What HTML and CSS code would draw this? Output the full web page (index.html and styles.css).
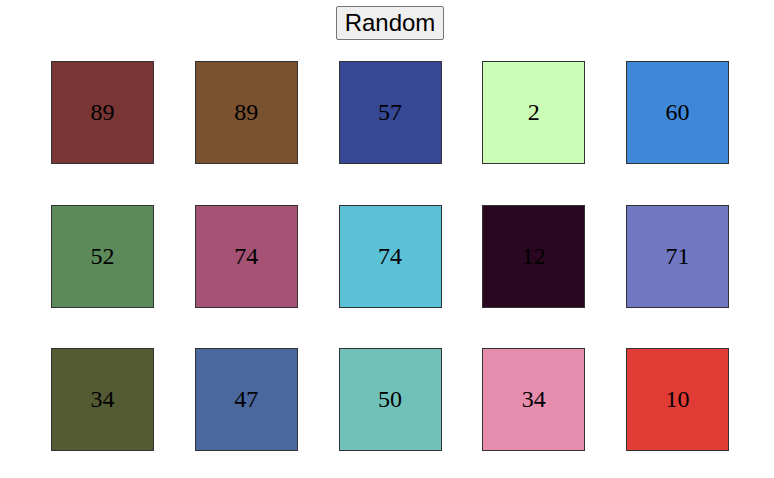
FILE: index.html
```html
<!DOCTYPE html>
<html lang="en">
<head>
<meta charset="UTF-8" />
<meta name="viewport" content="width=device-width, initial-scale=1" />
<title>Random Boxes</title>
<link rel="stylesheet" href="styles.css">
</head>
<body>

<div class="top">
  <button class="random-btn" type="button">Random</button>
</div>

<div class="board">
  <div class="box" style="background: #7a3535;">89</div>
  <div class="box" style="background: #7a5230;">89</div>
  <div class="box" style="background: #364895;">57</div>
  <div class="box" style="background: #ccfdb7;">2</div>
  <div class="box" style="background: #3f88d8;">60</div>

  <div class="box" style="background: #5c8a5a;">52</div>
  <div class="box" style="background: #a55275;">74</div>
  <div class="box" style="background: #5bc1d7;">74</div>
  <div class="box" style="background: #2a0720;">12</div>
  <div class="box" style="background: #7078c1;">71</div>

  <div class="box" style="background: #545a33;">34</div>
  <div class="box" style="background: #4a679e;">47</div>
  <div class="box" style="background: #6fc1b9;">50</div>
  <div class="box" style="background: #e68cad;">34</div>
  <div class="box" style="background: #e13b36;">10</div>
</div>

</body>
</html>
```

FILE: styles.css
```css
body {
  margin: 0;
  background: #fff;
}
.top {
  display: flex;
  justify-content: center;
  padding-top: 6px;
  padding-left: 6px;
}
.random-btn {
  font-family: "Liberation Sans", Arial, sans-serif;
  font-size: 24px;
  width: 108px;
  height: 34px;
  padding: 0;
  color: #000;
  background: #efefef;
  border: 1px solid #767676;
  border-radius: 2px;
}
.board {
  display: grid;
  grid-template-columns: repeat(5, 103px);
  column-gap: 40.75px;
  row-gap: 40.5px;
  margin: 21px 0 0 51px;
}
.box {
  box-sizing: border-box;
  width: 103px;
  height: 103px;
  border: 1px solid #333;
  display: flex;
  align-items: center;
  justify-content: center;
  font-family: "Liberation Serif", "Times New Roman", serif;
  font-size: 24px;
  color: #000;
}
```
